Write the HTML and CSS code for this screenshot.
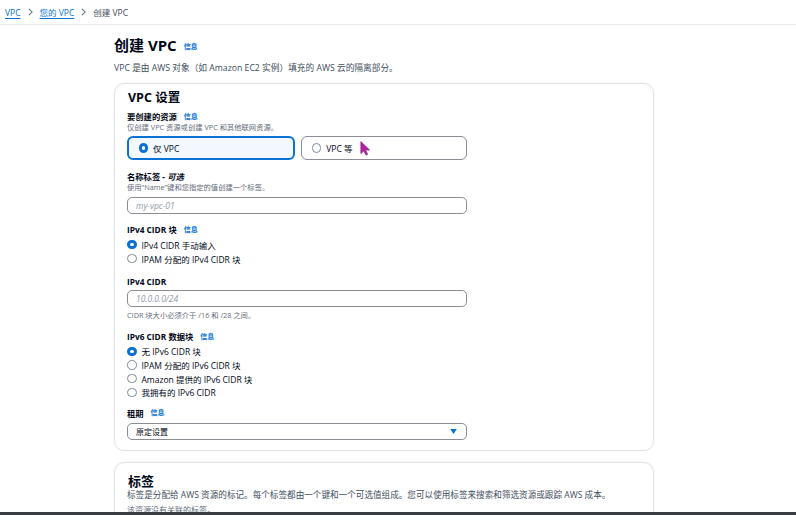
FILE: index.html
```html
<!DOCTYPE html>
<html lang="zh-CN">
<head>
<meta charset="utf-8">
<title>创建 VPC</title>
<link rel="stylesheet" href="styles.css">
</head>
<body>
<nav class="crumbs">
  <a class="crumb-link" href="#">VPC</a>
  <svg class="chev" viewBox="0 0 6 10" width="5" height="8"><path d="M1 1 L5 5 L1 9" fill="none" stroke="#5f6b7a" stroke-width="1.3"/></svg>
  <a class="crumb-link" href="#">您的 VPC</a>
  <svg class="chev" viewBox="0 0 6 10" width="5" height="8"><path d="M1 1 L5 5 L1 9" fill="none" stroke="#5f6b7a" stroke-width="1.3"/></svg>
  <span class="crumb-current">创建 VPC</span>
</nav>

<main class="main">
  <div class="page-head">
    <h1 class="page-title">创建 VPC</h1>
    <a class="info" href="#">信息</a>
  </div>
  <p class="page-desc">VPC 是由 AWS 对象（如 Amazon EC2 实例）填充的 AWS 云的隔离部分。</p>

  <section class="card">
    <h2 class="card-title">VPC 设置</h2>

    <div class="field">
      <div class="label-row"><span class="label">要创建的资源</span><a class="info" href="#">信息</a></div>
      <div class="desc">仅创建 VPC 资源或创建 VPC 和其他联网资源。</div>
      <div class="tiles">
        <div class="tile tile-on"><span class="radio radio-on"></span><span>仅 VPC</span></div>
        <div class="tile"><span class="radio"></span><span>VPC 等</span>
          <svg class="cursor" viewBox="0 0 11 16" width="11" height="15"><path d="M0.5 0.5 L0.5 13.5 L3.6 10.6 L6 15.2 L7.9 14.2 L5.6 9.7 L10 9.7 Z" fill="#b4249f" stroke="#8a1b7a" stroke-width="0.6"/></svg>
        </div>
      </div>
    </div>

    <div class="field">
      <div class="label-row"><span class="label">名称标签 - <i>可选</i></span></div>
      <div class="desc">使用“Name”键和您指定的值创建一个标签。</div>
      <div class="input input-gap5"><span class="placeholder">my-vpc-01</span></div>
    </div>

    <div class="field">
      <div class="label-row"><span class="label">IPv4 CIDR 块</span><a class="info" href="#">信息</a></div>
      <div class="radios">
        <div class="radio-row"><span class="radio radio-on"></span><span>IPv4 CIDR 手动输入</span></div>
        <div class="radio-row"><span class="radio"></span><span>IPAM 分配的 IPv4 CIDR 块</span></div>
      </div>
    </div>

    <div class="field">
      <div class="label-row"><span class="label">IPv4 CIDR</span></div>
      <div class="input"><span class="placeholder">10.0.0.0/24</span></div>
      <div class="desc helper">CIDR 块大小必须介于 /16 和 /28 之间。</div>
    </div>

    <div class="field field-v6">
      <div class="label-row"><span class="label">IPv6 CIDR 数据块</span><a class="info" href="#">信息</a></div>
      <div class="radios">
        <div class="radio-row"><span class="radio radio-on"></span><span>无 IPv6 CIDR 块</span></div>
        <div class="radio-row"><span class="radio"></span><span>IPAM 分配的 IPv6 CIDR 块</span></div>
        <div class="radio-row"><span class="radio"></span><span>Amazon 提供的 IPv6 CIDR 块</span></div>
        <div class="radio-row"><span class="radio"></span><span>我拥有的 IPv6 CIDR</span></div>
      </div>
    </div>

    <div class="field field-tenancy">
      <div class="label-row"><span class="label">租期</span><a class="info" href="#">信息</a></div>
      <div class="input select"><span class="value">原定设置</span>
        <svg class="caret" viewBox="0 0 8 6" width="7" height="5"><path d="M0 0 L8 0 L4 6 Z" fill="#0972d3"/></svg>
      </div>
    </div>
  </section>

  <section class="card card-tags">
    <h2 class="card-title">标签</h2>
    <div class="desc tags-desc">标签是分配给 AWS 资源的标记。每个标签都由一个键和一个可选值组成。您可以使用标签来搜索和筛选资源或跟踪 AWS 成本。</div>
    <div class="desc tags-empty">该资源没有关联的标签。</div>
  </section>
</main>
<div class="screen-edge"></div>
</body>
</html>
```

FILE: styles.css
```css
* { box-sizing: border-box; }
html, body { margin: 0; padding: 0; }
body {
  background: #ffffff;
  font-family: "Open Sans", "Noto Sans CJK SC", sans-serif;
  color: #000716;
  overflow: hidden;
  height: 515px;
}
a { text-decoration: none; }

.crumbs {
  height: 25px;
  display: flex;
  align-items: center;
  gap: 7px;
  padding-left: 5px;
  border-bottom: 1px solid #e9ebed;
  font-size: 8.5px;
}
.crumb-link { color: #0972d3; text-decoration: underline; text-underline-offset: 2px; }
.crumb-current { color: #414d5c; }
.chev { display: block; }

.main { padding: 10px 0 0 114px; height: 490px; overflow: hidden; }
.page-head { display: flex; align-items: center; gap: 7px; height: 20px; }
.page-title { margin: 0; font-size: 15px; line-height: 20px; font-weight: 700; color: #000716; }
.info { color: #0972d3; font-size: 7px; font-weight: 700; line-height: 10px; }
.page-head .info { margin-top: 3px; }
.page-desc { margin: 7px 0 0; font-size: 8.7px; line-height: 12px; color: #414d5c; }

.card {
  width: 540px;
  margin-top: 9px;
  border: 1px solid #e1e3e6;
  border-radius: 10px;
  padding: 6px 12px 10px 12px;
  box-shadow: 0 0 2px rgba(0, 7, 22, 0.07);
}
.card-title { margin: 0 0 0 1px; font-size: 12.5px; line-height: 16px; font-weight: 700; }

.field { width: 340px; margin-top: 10.5px; }
.card-title + .field { margin-top: 5px; }
.field-v6 { margin-top: 11.5px; }
.field-tenancy { margin-top: 8.5px; }

.label-row { display: flex; align-items: center; gap: 7px; height: 11px; }
.label { font-size: 8.3px; font-weight: 700; line-height: 11px; }
.label i { font-weight: 700; }
.desc { font-size: 7.3px; line-height: 10px; color: #5f6b7a; }
.helper { margin-top: 3px; }

.tiles { display: flex; gap: 6px; margin-top: 4px; }
.tile {
  position: relative;
  flex: 1;
  height: 24px;
  display: flex;
  align-items: center;
  gap: 5px;
  padding-left: 10px;
  border: 1.5px solid #8c8c94;
  border-radius: 6px;
  font-size: 8.5px;
  color: #000716;
}
.tile-on { border: 2px solid #0972d3; background: #f2f8fd; padding-left: 9.5px; }
.cursor { position: absolute; left: 58px; top: 4px; }

.radio {
  width: 9.5px;
  height: 9.5px;
  border-radius: 50%;
  border: 1px solid #7d8998;
  background: #fff;
  flex: none;
}
.radio-on { border: 3px solid #0972d3; }

.radios { margin-top: 2.5px; display: flex; flex-direction: column; }
.radio-row { display: flex; align-items: center; gap: 5px; height: 14px; font-size: 8.5px; color: #000716; }
.field-v6 .radio-row { height: 13.7px; }

.input {
  height: 17px;
  margin-top: 2.5px;
  border: 1px solid #8c8c94;
  border-radius: 5px;
  display: flex;
  align-items: center;
  padding: 0 8px;
  font-size: 8.5px;
}
.input-gap5 { margin-top: 5px; }
.field-tenancy .input { margin-top: 4.5px; }
.placeholder { color: #8d99a8; font-style: italic; }
.select { justify-content: space-between; padding-right: 9px; }
.value { color: #000716; font-size: 8px; }
.caret { display: block; }

.card-tags { margin-top: 11px; padding-top: 12px; height: 70px; }
.card-tags .card-title { font-size: 13px; line-height: 13px; }
.tags-desc { font-size: 8.6px; line-height: 10px; margin-top: 2px; color: #414d5c; }
.tags-empty { font-size: 8px; margin-top: 5px; }

.screen-edge {
  position: fixed;
  left: 0;
  right: 0;
  bottom: 0;
  height: 3px;
  background: #3a3d42;
}
```
